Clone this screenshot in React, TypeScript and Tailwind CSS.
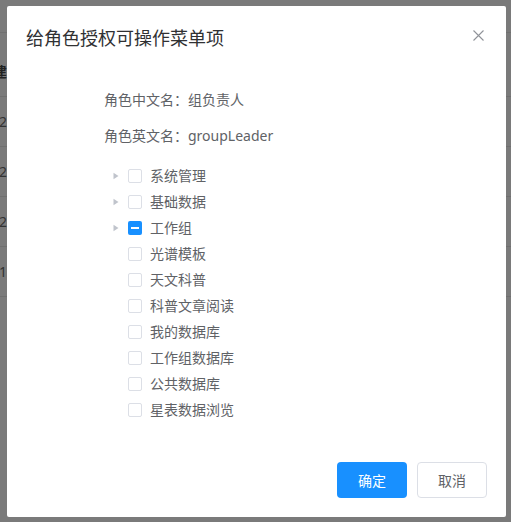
import React from 'react'

type Node = { label: string; expandable?: boolean; state?: 'none' | 'half' }

const nodes: Node[] = [
  { label: '系统管理', expandable: true },
  { label: '基础数据', expandable: true },
  { label: '工作组', expandable: true, state: 'half' },
  { label: '光谱模板' },
  { label: '天文科普' },
  { label: '科普文章阅读' },
  { label: '我的数据库' },
  { label: '工作组数据库' },
  { label: '公共数据库' },
  { label: '星表数据浏览' },
]

const font = { fontFamily: '"Noto Sans", "Noto Sans CJK SC", sans-serif' }

const Caret = () => (
  <svg width="12" height="12" viewBox="0 0 12 12" className="shrink-0">
    <path d="M3.5 2.8 L8.5 6 L3.5 9.2 Z" fill="#c0c4cc" />
  </svg>
)

const Checkbox = ({ half }: { half?: boolean }) =>
  half ? (
    <span className="flex h-[14px] w-[14px] items-center justify-center rounded-[2px] bg-[#1890ff]">
      <span className="h-[2px] w-[8px] bg-white" />
    </span>
  ) : (
    <span className="h-[14px] w-[14px] rounded-[2px] border border-[#dcdfe6] bg-white" />
  )

// the grey table behind the modal mask
const BackRows = () => (
  <div className="flex flex-col text-[14px] text-[#2a2a2a]">
    <div className="h-[33px] border-b border-[#707070]" />
    <div className="flex h-[64px] items-end border-b border-[#6f6f6f] pb-[14px]">
      <span className="-ml-[7px] font-bold text-[#222]">建</span>
    </div>
    {['2', '2', '2', '1'].map((d, i) => (
      <div key={i} className="flex h-[50px] items-center border-b border-[#6f6f6f]">
        <span className="-ml-[1px] text-[#333]">{d}</span>
      </div>
    ))}
  </div>
)

export default function App() {
  return (
    <div className="relative h-[522px] w-[511px] overflow-hidden bg-[#7a7a7a]" style={font}>
      <BackRows />

      <div className="absolute left-[7px] top-[6px] flex h-[511px] w-[499px] flex-col rounded-[2px] bg-white">
        <div className="relative flex h-[54px] items-start px-[19px] pt-[20px]">
          <span className="text-[18px] leading-[24px] text-[#303133]">给角色授权可操作菜单项</span>
          <svg
            width="11"
            height="11"
            viewBox="0 0 11 11"
            className="absolute right-[22px] top-[24px]"
          >
            <path d="M0.5 0.5 L10.5 10.5 M10.5 0.5 L0.5 10.5" stroke="#909399" strokeWidth="1.1" />
          </svg>
        </div>

        <div className="flex flex-col pl-[97px] text-[14px] text-[#606266]">
          <div className="mt-[30px] leading-[20px]">角色中文名：组负责人</div>
          <div className="mt-[16px] leading-[20px]">角色英文名：groupLeader</div>

          <div className="mt-[17px] flex flex-col">
            {nodes.map((n) => (
              <div key={n.label} className="flex h-[26px] items-center">
                <span className="ml-[6px] mr-[3px] flex w-[12px] items-center">
                  {n.expandable && <Caret />}
                </span>
                <span className="ml-[3px] mr-[8px] flex">
                  <Checkbox half={n.state === 'half'} />
                </span>
                <span className="leading-[20px]">{n.label}</span>
              </div>
            ))}
          </div>
        </div>

        <div className="mt-auto flex justify-end gap-[10px] pb-[19px] pr-[19px]">
          <button className="h-[36px] w-[70px] rounded-[4px] bg-[#1890ff] text-[14px] text-white">
            确定
          </button>
          <button className="h-[36px] w-[70px] rounded-[4px] border border-[#dcdfe6] bg-white text-[14px] text-[#606266]">
            取消
          </button>
        </div>
      </div>
    </div>
  )
}
